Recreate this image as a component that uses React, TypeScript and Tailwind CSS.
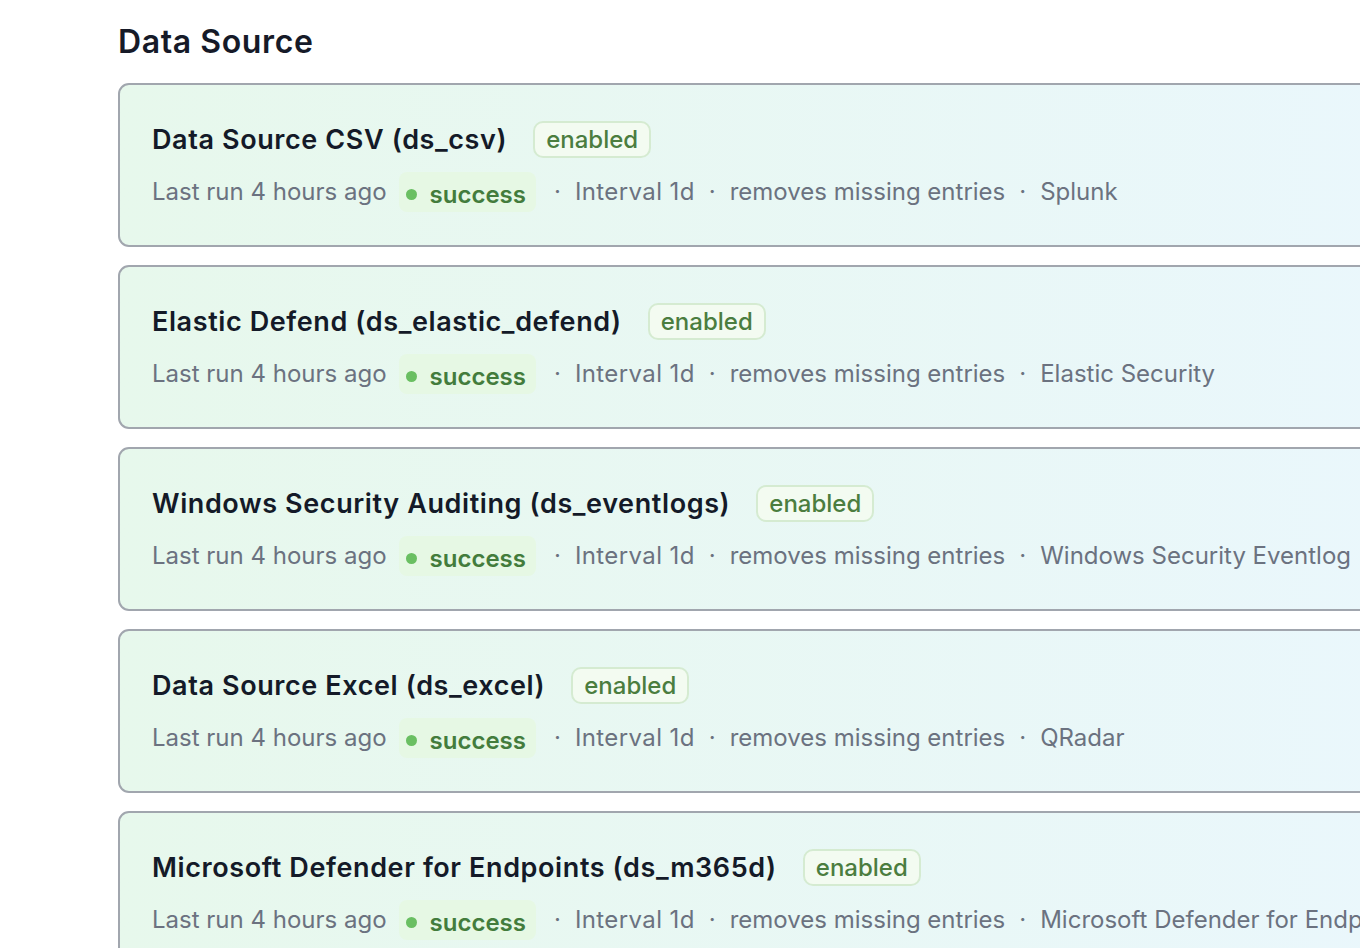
import React from 'react';

interface SourceProps {
  name: string;
  id: string;
  target: string;
}

const sources: SourceProps[] = [
  { name: 'Data Source CSV', id: 'ds_csv', target: 'Splunk' },
  { name: 'Elastic Defend', id: 'ds_elastic_defend', target: 'Elastic Security' },
  { name: 'Windows Security Auditing', id: 'ds_eventlogs', target: 'Windows Security Eventlog' },
  { name: 'Data Source Excel', id: 'ds_excel', target: 'QRadar' },
  { name: 'Microsoft Defender for Endpoints', id: 'ds_m365d', target: 'Microsoft Defender for Endpoints' },
];

function Dot() {
  return <span className="mx-[14px] text-[#6b7280]">·</span>;
}

function SourceCard({ name, id, target }: SourceProps) {
  return (
    <div className="rounded-[11px] border-2 border-[#a1a6ae] bg-gradient-to-r from-[#e7f8ec] to-[#eaf7fc] pl-[32px] pt-[36px] pb-[33px]">
      {/* Title */}
      <div className="flex items-center gap-[26px]">
        <div className="text-[27px] leading-[36px] font-semibold text-[#141a28] tracking-[0.6px] whitespace-nowrap">
          {name} ({id})
        </div>
        <div className="rounded-[10px] border-2 border-[#d5ebd1] bg-[#f3fbf1] px-[11px] h-[37px] flex items-center text-[24px] font-medium text-[#4b7d3f]">
          enabled
        </div>
      </div>

      {/* Meta */}
      <div className="mt-[14px] flex items-center text-[24px] text-[#6b7280] whitespace-nowrap h-[40px]">
        <span>Last run 4 hours ago</span>
        <span className="ml-[12px] flex items-center gap-[13px] rounded-[8px] bg-[#e6f8e4] pl-[7px] pr-[10px] h-[40px] pt-[5px]">
          <span className="w-[11px] h-[11px] rounded-full bg-[#6abf62]" />
          <span className="text-[24px] font-semibold text-[#437c3c]">success</span>
        </span>
        <span className="ml-[4px]"><Dot /></span>
        <span className="tracking-[0.4px]">Interval 1d</span>
        <Dot />
        <span>removes missing entries</span>
        <Dot />
        <span>{target}</span>
      </div>
    </div>
  );
}

export default function App() {
  return (
    <div className="w-[1360px] h-[948px] overflow-hidden bg-white" style={{ fontFamily: 'Inter, "Noto Sans", sans-serif' }}>
      <div className="w-[1400px] pl-[118px] pt-[22px]">
        <h1 className="text-[32px] leading-[40px] font-semibold text-[#161a28] tracking-[0.6px]">Data Source</h1>
        <div className="mt-[21px] flex flex-col gap-[18px]">
          {sources.map((s) => (
            <SourceCard key={s.id} {...s} />
          ))}
        </div>
      </div>
    </div>
  );
}
